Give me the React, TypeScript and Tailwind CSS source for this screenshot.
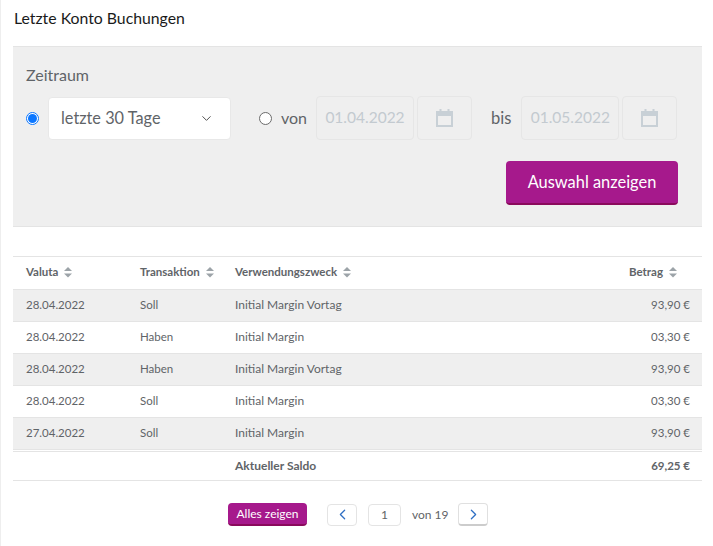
import React from 'react';
import { ChevronDown, ChevronLeft, ChevronRight } from 'lucide-react';

const FONT = "font-['Lato','Noto_Sans',sans-serif]";

const rows = [
  { date: '28.04.2022', type: 'Soll', text: 'Initial Margin Vortag', amount: '93,90 €' },
  { date: '28.04.2022', type: 'Haben', text: 'Initial Margin', amount: '03,30 €' },
  { date: '28.04.2022', type: 'Haben', text: 'Initial Margin Vortag', amount: '93,90 €' },
  { date: '28.04.2022', type: 'Soll', text: 'Initial Margin', amount: '03,30 €' },
  { date: '27.04.2022', type: 'Soll', text: 'Initial Margin', amount: '93,90 €' },
];

const SortIcon = () => (
  <svg width="8" height="11" viewBox="0 0 8 11" className="ml-[6px] shrink-0" fill="#9ca3a8">
    <path d="M4 0 L8 4 H0 Z" />
    <path d="M0 6.5 H8 L4 10.5 Z" />
  </svg>
);

const CalendarIcon = () => (
  <svg width="17" height="18" viewBox="0 0 17 18" fill="none" stroke="#c8d0d6" strokeWidth="2">
    <rect x="1" y="3" width="15" height="14" />
    <path d="M1 5 H16" strokeWidth="4" />
    <path d="M4.5 0 V3 M12.5 0 V3" />
  </svg>
);

const DateField = ({ value }: { value: string }) => (
  <div className="flex gap-[3px]">
    <div className="flex h-[44px] w-[98px] items-center justify-center rounded border border-[#e6e6e6] bg-[#efefef] text-[15.5px] text-[#c3cad0]">
      {value}
    </div>
    <div className="flex h-[44px] w-[55px] items-center justify-center rounded border border-[#e6e6e6] bg-[#efefef]">
      <CalendarIcon />
    </div>
  </div>
);

const Radio = ({ checked }: { checked?: boolean }) =>
  checked ? (
    <span className="flex h-[13px] w-[13px] shrink-0 items-center justify-center rounded-full border border-[#0b76ff] bg-white">
      <span className="h-[9px] w-[9px] rounded-full bg-[#0b76ff]" />
    </span>
  ) : (
    <span className="block h-[13px] w-[13px] shrink-0 rounded-full border border-[#6b6b6b] bg-white" />
  );

export default function App() {
  return (
    <div className={`${FONT} h-[546px] w-[713px] overflow-hidden border-l border-[#eeeeee] bg-white pl-[12px] pr-[11px] text-[#5f6468]`}>
      <h1 className="pl-px pt-[8px] text-[15.8px] leading-[20px] text-[#1a1a1a]">Letzte Konto Buchungen</h1>

      <div className="mt-[18px] h-[181px] border-y border-[#e4e4e4] bg-[#efefef] pl-[13px] pr-[24px] pt-[17px]">
        <div className="text-[16px] leading-[22px]">Zeitraum</div>
        <div className="mt-[10px] flex items-center">
          <Radio checked />
          <div className="ml-[9px] flex h-[43px] w-[183px] items-center justify-between rounded border border-[#e8e8e8] bg-white pl-[12px] pr-[16px] text-[16.3px]">
            letzte 30 Tage
            <ChevronDown size={15} strokeWidth={1.5} className="text-[#444]" />
          </div>
          <div className="ml-[28px]"><Radio /></div>
          <span className="ml-[9px] mr-[10px] w-[25px] text-[16px]">von</span>
          <DateField value="01.04.2022" />
          <span className="ml-[19px] mr-[10px] text-[16.5px]">bis</span>
          <DateField value="01.05.2022" />
        </div>
        <div className="mt-[21px] flex justify-end">
          <button className="h-[44px] w-[172px] rounded border-b-2 border-[#8a0a5c] bg-[#a6198c] text-[16.4px] text-white">
            Auswahl anzeigen
          </button>
        </div>
      </div>

      <table className="mt-[29px] w-full table-fixed border-collapse border-t border-[#e4e4e4] text-[11.5px]">
        <colgroup>
          <col className="w-[127px]" />
          <col className="w-[95px]" />
          <col />
          <col className="w-[140px]" />
        </colgroup>
        <thead>
          <tr className="h-[33px] border-b border-[#e4e4e4] font-bold">
            <th className="pb-[2px] pl-[13px] text-left"><span className="flex items-center">Valuta<SortIcon /></span></th>
            <th className="pb-[2px] text-left"><span className="flex items-center">Transaktion<SortIcon /></span></th>
            <th className="pb-[2px] text-left"><span className="flex items-center">Verwendungszweck<SortIcon /></span></th>
            <th className="pb-[2px] pr-[25px]"><span className="flex items-center justify-end">Betrag<SortIcon /></span></th>
          </tr>
        </thead>
        <tbody>
          {rows.map((row, i) => (
            <tr key={i} className={`h-[32px] border-b border-[#e4e4e4] ${i % 2 === 0 ? 'bg-[#efefef]' : 'bg-white'}`}>
              <td className="pb-[2px] pl-[13px]">{row.date}</td>
              <td className="pb-[2px]">{row.type}</td>
              <td className="pb-[2px] text-[12px]">{row.text}</td>
              <td className="pb-[2px] pr-[12px] text-right">{row.amount}</td>
            </tr>
          ))}
          <tr className="h-[2px]">
            <td colSpan={4} />
          </tr>
          <tr className="h-[29px] border-y border-[#e4e4e4] font-bold">
            <td />
            <td />
            <td className="text-[12px]">Aktueller Saldo</td>
            <td className="pr-[12px] text-right">69,25 €</td>
          </tr>
        </tbody>
      </table>

      <div className="mt-[22px] flex items-center pl-[215px] text-[12px]">
        <button className="h-[23px] w-[79px] rounded border-b-2 border-[#8a0a5c] bg-[#a6198c] text-white">Alles zeigen</button>
        <button className="ml-[20px] flex h-[22px] w-[30px] items-center justify-center rounded border border-[#e4e4e4] bg-white text-[#2f6fc4]">
          <ChevronLeft size={17} strokeWidth={1.8} />
        </button>
        <div className="ml-[11px] flex h-[22px] w-[33px] items-center justify-center rounded border border-[#e4e4e4]">1</div>
        <span className="ml-[11px] w-[35px] whitespace-nowrap">von 19</span>
        <button className="ml-[11px] flex h-[23px] w-[30px] items-center justify-center rounded border border-b-2 border-[#e0e0e0] border-b-[#cccccc] bg-white text-[#2f6fc4]">
          <ChevronRight size={17} strokeWidth={1.8} />
        </button>
      </div>
    </div>
  );
}
